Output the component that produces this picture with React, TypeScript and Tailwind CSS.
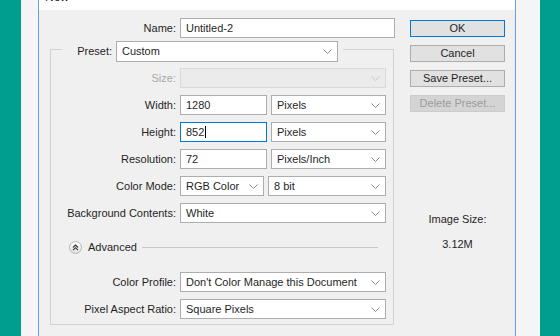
import React from "react";

const font = { fontFamily: '"Liberation Sans", Arial, sans-serif' };

const Chevron = ({ disabled = false }: { disabled?: boolean }) => (
  <svg width="9" height="5" viewBox="0 0 9 5" className="shrink-0">
    <polyline
      points="0.5,0.5 4.5,4.5 8.5,0.5"
      fill="none"
      stroke={disabled ? "#c8c8c8" : "#8a8a8a"}
      strokeWidth="1"
    />
  </svg>
);

const Select = ({ value, w, h = "h-[20px]", disabled = false }: { value: string; w: string; h?: string; disabled?: boolean }) => (
  <div
    className={`${w} ${h} flex items-center justify-between pl-[5px] pr-[5px] border ${
      disabled ? "bg-[#ebebeb] border-[#d9d9d9]" : "bg-white border-[#adadad]"
    }`}
  >
    <span className="text-[#1f1f1f] whitespace-nowrap">{value}</span>
    <Chevron disabled={disabled} />
  </div>
);

const Input = ({ value, w, focused = false }: { value: string; w: string; focused?: boolean }) => (
  <div
    className={`${w} h-[20px] flex items-center pl-[5px] bg-white border ${
      focused ? "border-[#0078d7]" : "border-[#adadad]"
    }`}
  >
    <span className="text-[#1f1f1f]">{value}</span>
    {focused && <span className="w-px h-[12px] bg-black ml-px" />}
  </div>
);

const Row = ({ label, children, muted = false, mt = "mt-[7px]" }: { label: string; children: React.ReactNode; muted?: boolean; mt?: string }) => (
  <div className={`flex items-center gap-[4px] ${mt}`}>
    <div className={`w-[125px] text-right whitespace-nowrap ${muted ? "text-[#a8a8a8]" : "text-[#1f1f1f]"}`}>{label}</div>
    {children}
  </div>
);

const Button = ({ label, primary = false, disabled = false }: { label: string; primary?: boolean; disabled?: boolean }) => (
  <div
    className={`h-[17px] w-[95px] flex items-center justify-center border ${
      primary
        ? "border-[#0078d7] bg-[#e1e1e1] text-[#1f1f1f]"
        : disabled
        ? "border-[#cccccc] bg-[#d4d4d4] text-[#9c9c9c]"
        : "border-[#adadad] bg-[#e1e1e1] text-[#1f1f1f]"
    }`}
  >
    {label}
  </div>
);

export default function App() {
  return (
    <div className="w-[560px] h-[336px] flex overflow-hidden text-[11px] leading-[13px]" style={font}>
      <div className="w-[21px] bg-[#009e8e]" />
      <div className="w-[17px] bg-[#f5f5f5]" />
      <div className="w-[478px] border-x border-[#63a4e0] bg-[#f0f0f0] flex flex-col">
        {/* title bar, scrolled mostly out of view */}
        <div className="h-[10px] bg-white overflow-hidden flex justify-between px-[6px]">
          <span className="-mt-[9px] text-[12px] leading-[12px] text-[#1f1f1f]">New</span>
          <span className="-mt-[9px] text-[14px] leading-[12px] text-[#444] mr-[4px]">×</span>
        </div>
        <div className="flex">
          {/* left column */}
          <div className="pl-[11px] pt-[8px]">
            <div className="flex items-center gap-[4px]">
              <div className="w-[126px] text-right text-[#1f1f1f]">Name:</div>
              <Input value="Untitled-2" w="w-[215px]" />
            </div>
            <div className="mt-[11px] w-[344px] h-[276px] border border-[#d2d2d2]">
              <div className="-mt-[9px] ml-[11px] w-fit flex items-center gap-[4px] bg-[#f0f0f0] pl-[15px] pr-[5px]">
                <div className="w-[35px] text-right text-[#1f1f1f]">Preset:</div>
                <Select value="Custom" w="w-[222px]" h="h-[21px]" />
              </div>
              <Row label="Size:" muted mt="mt-[6px]">
                <Select value="" w="w-[206px]" disabled />
              </Row>
              <Row label="Width:">
                <Input value="1280" w="w-[87px]" />
                <Select value="Pixels" w="w-[115px]" />
              </Row>
              <Row label="Height:">
                <Input value="852" w="w-[87px]" focused />
                <Select value="Pixels" w="w-[115px]" />
              </Row>
              <Row label="Resolution:">
                <Input value="72" w="w-[87px]" />
                <Select value="Pixels/Inch" w="w-[115px]" />
              </Row>
              <Row label="Color Mode:">
                <Select value="RGB Color" w="w-[84px]" />
                <Select value="8 bit" w="w-[118px]" />
              </Row>
              <Row label="Background Contents:">
                <Select value="White" w="w-[206px]" />
              </Row>
              <div className="mt-[17px] h-[14px] flex items-center pl-[18px] pr-[15px]">
                <div className="w-[13px] h-[13px] rounded-full border border-[#b5b5b5] bg-gradient-to-b from-white to-[#e2e2e2] flex items-center justify-center">
                  <svg width="7" height="7" viewBox="0 0 7 7">
                    <polyline points="1,3.5 3.5,1 6,3.5" fill="none" stroke="#333" strokeWidth="1.1" />
                    <polyline points="1,6.2 3.5,3.7 6,6.2" fill="none" stroke="#333" strokeWidth="1.1" />
                  </svg>
                </div>
                <span className="ml-[6px] text-[#1f1f1f]">Advanced</span>
                <div className="flex-1 ml-[5px] h-px bg-[#c8c8c8]" />
              </div>
              <Row label="Color Profile:" mt="mt-[18px]">
                <Select value="Don't Color Manage this Document" w="w-[206px]" />
              </Row>
              <Row label="Pixel Aspect Ratio:">
                <Select value="Square Pixels" w="w-[206px]" />
              </Row>
            </div>
          </div>
          {/* right column */}
          <div className="ml-[15px] pt-[10px] w-[95px] flex flex-col gap-[8px]">
            <Button label="OK" primary />
            <Button label="Cancel" />
            <Button label="Save Preset..." />
            <Button label="Delete Preset..." disabled />
            <div className="mt-[93px] text-center text-[#1f1f1f]">Image Size:</div>
            <div className="mt-[4px] text-center text-[#1f1f1f]">3.12M</div>
          </div>
        </div>
      </div>
      <div className="w-[24px] bg-[#f5f5f5]" />
      <div className="flex-1 bg-[#009e8e]" />
    </div>
  );
}
